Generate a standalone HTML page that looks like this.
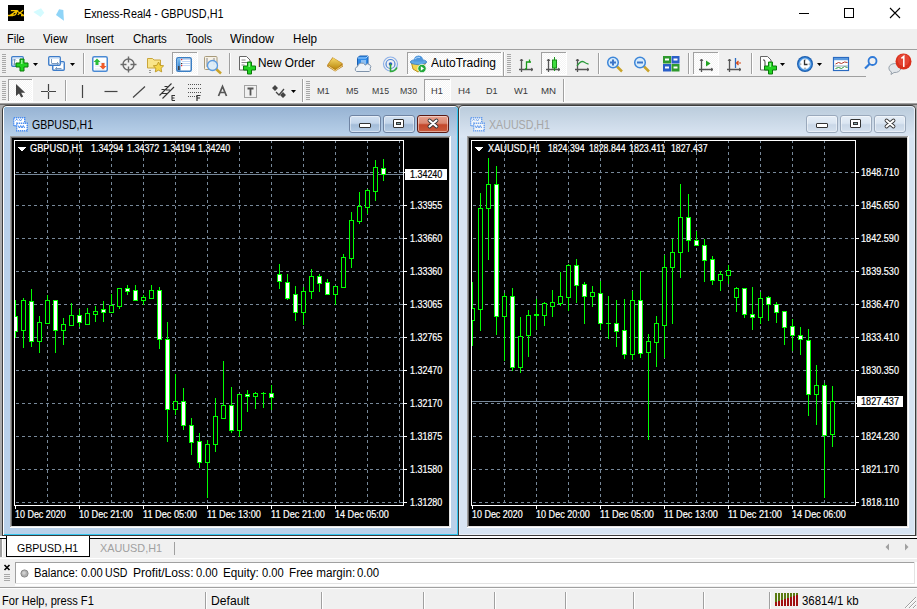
<!DOCTYPE html><html><head><meta charset="utf-8"><style>
*{margin:0;padding:0;box-sizing:border-box}
html,body{width:917px;height:609px;overflow:hidden;background:#f0f0f0;font-family:"Liberation Sans",sans-serif;position:relative}
.a{position:absolute}
.t{position:absolute;white-space:nowrap;line-height:1}
svg{position:absolute;overflow:visible}
</style></head><body><div class="a" style="left:0px;top:0px;width:917px;height:29px;background:#fff"></div><div class="t" style="left:83.5px;top:7.84px;font-size:12px;color:#000;transform:scaleX(0.9015);transform-origin:0 0;">Exness-Real4 - GBPUSD,H1</div><svg width="917" height="29" style="left:0;top:0"><rect x="8" y="5" width="16" height="16" fill="#000"/><path d="M8 15.5 H13 M21 15.5 H24 M10.8 10.7 H16.8 L10.2 15.3 M12.3 14.8 Q13.5 11.8 16.5 12.2 Q16.2 15.2 12.8 15.4 M16.8 11 L23.6 15.3 M17.8 14.8 L23.2 10.3" stroke="#f3c300" stroke-width="1.3" fill="none"/><path d="M33.3 12.1 L41 8.3 L44.3 12.8 L40.6 17 Z" fill="#d4fbff"/><path d="M56 14.9 L59.1 9.3 L63.3 10 L63.9 20.8 Z" fill="#8fd4f7"/><path d="M799 13.5 h10" stroke="#000" stroke-width="1"/><rect x="844.5" y="8.5" width="9" height="9" fill="none" stroke="#000" stroke-width="1"/><path d="M890 8 L900 18 M900 8 L890 18" stroke="#000" stroke-width="1.1"/></svg><div class="a" style="left:0px;top:29px;width:917px;height:20px;background:#f0f0f0"></div><div class="t" style="left:7.3px;top:32.84px;font-size:12px;color:#000;transform:scaleX(0.9161);transform-origin:0 0;">File</div><div class="t" style="left:43.3px;top:32.84px;font-size:12px;color:#000;transform:scaleX(0.9457);transform-origin:0 0;">View</div><div class="t" style="left:86.4px;top:32.84px;font-size:12px;color:#000;transform:scaleX(0.9300);transform-origin:0 0;">Insert</div><div class="t" style="left:133.3px;top:32.84px;font-size:12px;color:#000;transform:scaleX(0.9564);transform-origin:0 0;">Charts</div><div class="t" style="left:185.6px;top:32.84px;font-size:12px;color:#000;transform:scaleX(0.9350);transform-origin:0 0;">Tools</div><div class="t" style="left:229.9px;top:32.84px;font-size:12px;color:#000;transform:scaleX(1.0323);transform-origin:0 0;">Window</div><div class="t" style="left:292.5px;top:32.84px;font-size:12px;color:#000;transform:scaleX(0.9732);transform-origin:0 0;">Help</div><div class="a" style="left:0px;top:49px;width:917px;height:1px;background:#a0a0a0"></div><div class="a" style="left:0px;top:50px;width:917px;height:26px;background:#f0f0f0"></div><div class="a" style="left:0px;top:76px;width:866px;height:1px;background:#a0a0a0"></div><div class="a" style="left:0px;top:77px;width:917px;height:26px;background:#f0f0f0"></div><div class="a" style="left:0px;top:101px;width:917px;height:2px;background:#f7f7f7"></div><svg width="917" height="609" style="left:0;top:0"><defs><pattern id="dith" width="2" height="2" patternUnits="userSpaceOnUse"><rect width="2" height="2" fill="#f4f4f4"/><rect width="1" height="1" fill="#fff"/><rect x="1" y="1" width="1" height="1" fill="#fff"/></pattern><linearGradient id="gold" x1="0" y1="0" x2="0" y2="1"><stop offset="0" stop-color="#f7d96a"/><stop offset="1" stop-color="#b8860b"/></linearGradient><linearGradient id="blu" x1="0" y1="0" x2="0" y2="1"><stop offset="0" stop-color="#7fc4f5"/><stop offset="1" stop-color="#1f6fc5"/></linearGradient></defs><rect x="2" y="54" width="4" height="1" fill="#a8a8a8"/><rect x="2" y="56" width="4" height="1" fill="#a8a8a8"/><rect x="2" y="58" width="4" height="1" fill="#a8a8a8"/><rect x="2" y="60" width="4" height="1" fill="#a8a8a8"/><rect x="2" y="62" width="4" height="1" fill="#a8a8a8"/><rect x="2" y="64" width="4" height="1" fill="#a8a8a8"/><rect x="2" y="66" width="4" height="1" fill="#a8a8a8"/><rect x="2" y="68" width="4" height="1" fill="#a8a8a8"/><rect x="2" y="70" width="4" height="1" fill="#a8a8a8"/><rect x="2" y="72" width="4" height="1" fill="#a8a8a8"/><rect x="11.75" y="56.75" width="11.5" height="9.5" rx="1" fill="#fff" stroke="#3d7cc9" stroke-width="1.4"/><rect x="12.5" y="57.5" width="10" height="1.5" fill="#d6e6f8"/><path d="M14.5 59 v6" stroke="#7d9cc0" stroke-width="1.2"/><path d="M13 60.5 l1.5 -1.5 l1.5 1.5 M13 63.5 l1.5 1.5 l1.5 -1.5" stroke="#7d9cc0" fill="none"/><path d="M20 59 h4 v4 h4 v4 h-4 v4 h-4 v-4 h-4 v-4 h4 z" fill="#22d422" stroke="#0a7a0a" stroke-width="1"/><path d="M21 60 h1.5 v4 h-1.5 z" fill="#8ff58f"/><path d="M33 63 h5 l-2.5 3 z" fill="#000"/><rect x="52.75" y="61.75" width="11.5" height="8.5" rx="1" fill="#fff" stroke="#3d7cc9" stroke-width="1.4"/><rect x="53.5" y="62.5" width="10" height="1.5" fill="#d6e6f8"/><rect x="48.75" y="56.75" width="11.5" height="8.5" rx="1" fill="#fff" stroke="#3d7cc9" stroke-width="1.4"/><rect x="49.5" y="57.5" width="10" height="1.5" fill="#d6e6f8"/><path d="M51.5 63.5 h7 M55.5 68.5 h6" stroke="#7d9cc0" stroke-width="1"/><path d="M51.5 59 v4" stroke="#7d9cc0"/><path d="M57 62 l1.5 1.5 l-1.5 1.5 M57 67 l-1.5 1.5 l1.5 1.5" stroke="#7d9cc0" fill="none"/><path d="M70 63 h5 l-2.5 3 z" fill="#000"/><rect x="83" y="53" width="1" height="21" fill="#a0a0a0"/><rect x="84" y="53" width="1" height="21" fill="#fff"/><rect x="92.75" y="56.75" width="14.5" height="14.5" rx="1.5" fill="#fff" stroke="#4a8ad4" stroke-width="1.5"/><path d="M95 63 h10 M95 66 h10 M95 69 h10" stroke="#dde6f0" stroke-width="1"/><path d="M97 58.5 l3.5 3.5 h-2 v3 h-3 v-3 h-2 z" fill="#2dbd3a"/><path d="M103 69.5 l3.5 -3.5 h-2 v-3 h-3 v3 h-2 z" fill="#f05a28"/><circle cx="128.5" cy="64.5" r="5.5" fill="none" stroke="#6a6a6a" stroke-width="1.4"/><path d="M128.5 56.5 v6 M128.5 66.5 v6 M120.5 64.5 h6 M130.5 64.5 h6" stroke="#6a6a6a" stroke-width="1.4"/><path d="M147.5 58.5 h5 l1.5 1.5 h6.5 v8 h-13 z" fill="#f9e58a" stroke="#c9a53a" stroke-width="1"/><path d="M158.5 62 l1.6 3.3 3.6 .5 -2.6 2.5 .6 3.6 -3.2 -1.7 -3.2 1.7 .6 -3.6 -2.6 -2.5 3.6 -.5 z" fill="#f5d64a" stroke="#b8901a" stroke-width=".8"/><path d="M150 70 v3" stroke="#444" stroke-dasharray="1 1"/><rect x="172" y="52" width="26" height="23" fill="#fff"/><rect x="172" y="52" width="25" height="22" fill="#a0a0a0"/><rect x="173" y="53" width="24" height="21" fill="url(#dith)"/><rect x="176.75" y="57.75" width="14.5" height="13.5" rx="1.5" fill="#fff" stroke="#3c7fc4" stroke-width="1.5"/><rect x="177.5" y="58.5" width="3" height="12" fill="url(#blu)"/><rect x="178" y="66" width="1.5" height="4" fill="#444"/><path d="M182 59.5 h8 M182 61.5 h8 M182 63.5 h8 M182 65.5 h8" stroke="#c5d8f5" stroke-width="1"/><rect x="181" y="59" width="1.2" height="1.2" fill="#e22"/><rect x="181" y="63" width="1.2" height="1.2" fill="#333"/><rect x="181" y="65" width="1.2" height="1.2" fill="#e22"/><rect x="204.5" y="56.5" width="12.5" height="13" rx="1" fill="#f6f1e6" stroke="#a89a7a" stroke-width="1"/><path d="M207 58 v9 M214 58 v7" stroke="#888" stroke-width="1"/><path d="M215.5 68.5 l5.5 5" stroke="#c9a32a" stroke-width="2.5"/><circle cx="212.5" cy="65.5" r="5" fill="#dcecf8" fill-opacity=".9" stroke="#5b9be0" stroke-width="1.3"/><rect x="229" y="53" width="1" height="21" fill="#a0a0a0"/><rect x="230" y="53" width="1" height="21" fill="#fff"/><path d="M239.5 56.5 h7 l3.5 3.5 v10 h-10.5 z" fill="#fff" stroke="#666" stroke-width="1"/><path d="M241.5 60 h4 M241.5 62.5 h6 M241.5 65 h3" stroke="#888"/><path d="M247.5 62 h4 v4 h4 v4 h-4 v4 h-4 v-4 h-4 v-4 h4 z" fill="#22d422" stroke="#0a7a0a" stroke-width="1"/><path d="M248.5 63 h1.5 v4 h-1.5 z" fill="#8ff58f"/><path d="M327.2 65 L332.5 57.2 L342.5 63.3 L343 66.4 L335.1 71.6 L327.2 66.4 Z" fill="#b87c1a"/><path d="M328 64.6 L333 57.8 L342 63.4 L336 69.5 Z" fill="url(#gold)"/><path d="M328.5 66 L335.2 70.6 L342.5 65.5" stroke="#f3d98a" stroke-width="1" fill="none"/><path d="M357.5 58 l2 -2 h8.5 v9.5 h-10.5 z" fill="#2f8ae8" stroke="#1b5fb0" stroke-width="1"/><path d="M357.5 58 h8.5 l2 -2" stroke="#9fd0ff" fill="none"/><path d="M361 61 h5 M361 63 h5" stroke="#e8f4ff" stroke-width="1"/><path d="M356.5 71.5 a2.6 2.6 0 0 1 1 -4.8 a4.2 4.2 0 0 1 7.8 -1.6 a3 3 0 0 1 4.8 3.6 a2 2 0 0 1 -0.8 2.8 z" fill="#eef3f8" stroke="#7f93aa" stroke-width="1"/><circle cx="390.5" cy="64" r="7" fill="none" stroke="#8fb2e8" stroke-width="1.2"/><circle cx="390.5" cy="64" r="4.5" fill="none" stroke="#4f86d8" stroke-width="1.2"/><circle cx="390.5" cy="64" r="1.8" fill="#2a5fc0"/><path d="M390.5 64 v7.5 a7 7 0 0 0 6.5 -4" stroke="#2faa3a" stroke-width="1.6" fill="none"/><rect x="407" y="52" width="95" height="23" fill="#fff"/><rect x="407" y="52" width="94" height="22" fill="#a0a0a0"/><rect x="408" y="53" width="93" height="21" fill="url(#dith)"/><path d="M411.5 63 h14 l-3 6 l-4.5 3 l-5 -3 z" fill="#f3d44e" stroke="#b8901a" stroke-width="1"/><ellipse cx="418.5" cy="62" rx="8.2" ry="2.6" fill="#5fa8e6" stroke="#3a7cc0" stroke-width=".8"/><path d="M413.5 61.5 q0.5 -6 5 -6 q4.5 0 5 6 z" fill="#4f96dc"/><path d="M415 59 q2 -2.5 5 -1.5" stroke="#a8d4ff" fill="none"/><circle cx="422" cy="68.5" r="4.2" fill="#22a83a" stroke="#fff" stroke-width=".8"/><path d="M420.8 66.3 l3.2 2.2 l-3.2 2.2 z" fill="#fff"/><rect x="503" y="52" width="1" height="24" fill="#a0a0a0"/><rect x="504" y="52" width="1" height="24" fill="#fff"/><rect x="507" y="54" width="4" height="1" fill="#a8a8a8"/><rect x="507" y="56" width="4" height="1" fill="#a8a8a8"/><rect x="507" y="58" width="4" height="1" fill="#a8a8a8"/><rect x="507" y="60" width="4" height="1" fill="#a8a8a8"/><rect x="507" y="62" width="4" height="1" fill="#a8a8a8"/><rect x="507" y="64" width="4" height="1" fill="#a8a8a8"/><rect x="507" y="66" width="4" height="1" fill="#a8a8a8"/><rect x="507" y="68" width="4" height="1" fill="#a8a8a8"/><rect x="507" y="70" width="4" height="1" fill="#a8a8a8"/><rect x="507" y="72" width="4" height="1" fill="#a8a8a8"/><path d="M521.5 59 v13 M519 69.5 h14" stroke="#555" stroke-width="1.3" fill="none"/><path d="M520 61 l1.5 -2 l1.5 2 M531 68 l2 1.5 l-2 1.5" stroke="#555" stroke-width="1" fill="none"/><path d="M526.5 69 v-7 h3 v-2.5" stroke="#1a9a1a" stroke-width="1.3" fill="none"/><path d="M525 69 h1.5 M529.5 62 h1.5" stroke="#1a9a1a" stroke-width="1.3"/><rect x="541" y="52" width="26" height="23" fill="#fff"/><rect x="541" y="52" width="25" height="22" fill="#a0a0a0"/><rect x="542" y="53" width="24" height="21" fill="url(#dith)"/><path d="M548.5 59 v13 M546 69.5 h14" stroke="#555" stroke-width="1.3" fill="none"/><path d="M547 61 l1.5 -2 l1.5 2 M558 68 l2 1.5 l-2 1.5" stroke="#555" stroke-width="1" fill="none"/><path d="M554.5 57 v14" stroke="#1a9a1a" stroke-width="1"/><rect x="552.5" y="60" width="4" height="8" fill="#3fdc3f" stroke="#1a8a1a" stroke-width="1"/><path d="M577.5 59 v13 M575 69.5 h14" stroke="#555" stroke-width="1.3" fill="none"/><path d="M576 61 l1.5 -2 l1.5 2 M587 68 l2 1.5 l-2 1.5" stroke="#555" stroke-width="1" fill="none"/><path d="M577 66 q4 -6 7 -4 t4.5 2" stroke="#2a9a3a" stroke-width="1.3" fill="none"/><rect x="598" y="53" width="1" height="21" fill="#a0a0a0"/><rect x="599" y="53" width="1" height="21" fill="#fff"/><path d="M617 66.5 l5 5" stroke="#c9a32a" stroke-width="2.5"/><circle cx="613" cy="62.5" r="5.3" fill="#d8ecfb" stroke="#3d86d8" stroke-width="1.5"/><path d="M610 62.5 h6" stroke="#3d76c8" stroke-width="2"/><path d="M613 59.5 v6" stroke="#3d76c8" stroke-width="2"/><path d="M644 66.5 l5 5" stroke="#c9a32a" stroke-width="2.5"/><circle cx="640" cy="62.5" r="5.3" fill="#d8ecfb" stroke="#3d86d8" stroke-width="1.5"/><path d="M637 62.5 h6" stroke="#3d76c8" stroke-width="2"/><rect x="663" y="56" width="8" height="7.5" fill="#2f9a2f"/><rect x="671.5" y="56" width="8" height="7.5" fill="#2a5fc8"/><rect x="663" y="64" width="8" height="7.5" fill="#2a5fc8"/><rect x="671.5" y="64" width="8" height="7.5" fill="#2f9a2f"/><path d="M665 59.5 h4 M673.5 59.5 h4 M665 67.5 h4 M673.5 67.5 h4" stroke="#fff" stroke-width="2"/><rect x="688" y="53" width="1" height="21" fill="#a0a0a0"/><rect x="689" y="53" width="1" height="21" fill="#fff"/><rect x="693" y="52" width="26" height="23" fill="#fff"/><rect x="693" y="52" width="25" height="22" fill="#a0a0a0"/><rect x="694" y="53" width="24" height="21" fill="url(#dith)"/><path d="M701.5 59 v13 M699 69.5 h14" stroke="#555" stroke-width="1.3" fill="none"/><path d="M700 61 l1.5 -2 l1.5 2 M711 68 l2 1.5 l-2 1.5" stroke="#555" stroke-width="1" fill="none"/><path d="M706 60.5 v6 l4.5 -3 z" fill="#23a323"/><path d="M729.5 59 v13 M727 69.5 h14" stroke="#555" stroke-width="1.3" fill="none"/><path d="M728 61 l1.5 -2 l1.5 2 M739 68 l2 1.5 l-2 1.5" stroke="#555" stroke-width="1" fill="none"/><path d="M735.5 58 v10" stroke="#2a6ac0" stroke-width="1.3"/><path d="M741 63 h-4 M738.5 61 l-2 2 l2 2" stroke="#d44a1a" stroke-width="1.2" fill="none"/><rect x="751" y="53" width="1" height="21" fill="#a0a0a0"/><rect x="752" y="53" width="1" height="21" fill="#fff"/><path d="M760.5 56.5 h7 l3.5 3.5 v10 h-10.5 z" fill="#fff" stroke="#666" stroke-width="1"/><path d="M763 60 q2 -1 2 2 v5 q0 2 2 1" stroke="#444" fill="none"/><path d="M768.5 62 h4 v4 h4 v4 h-4 v4 h-4 v-4 h-4 v-4 h4 z" fill="#22d422" stroke="#0a7a0a" stroke-width="1"/><path d="M769.5 63 h1.5 v4 h-1.5 z" fill="#8ff58f"/><path d="M780 63 h5 l-2.5 3 z" fill="#000"/><circle cx="805" cy="64" r="8" fill="#1d5fb0"/><circle cx="805" cy="64" r="6.8" fill="#3f8fe0"/><circle cx="805" cy="64" r="5.2" fill="#fff" stroke="#bcd8f4" stroke-width=".8"/><path d="M804.5 60 v4.5 h3" stroke="#333" stroke-width="1.3" fill="none"/><circle cx="805" cy="59.8" r=".6" fill="#555"/><circle cx="805" cy="68.2" r=".6" fill="#555"/><circle cx="800.8" cy="64" r=".6" fill="#555"/><circle cx="809.2" cy="64" r=".6" fill="#555"/><path d="M817 63 h5 l-2.5 3 z" fill="#000"/><rect x="833.5" y="57.5" width="15" height="13" fill="#fff" stroke="#2a6ac0" stroke-width="1.2"/><rect x="834" y="58" width="14" height="2.2" fill="#5a9ae0"/><path d="M835.5 64 l3 -1.5 3 1 3 -1.5 3 .5" stroke="#b03a2a" fill="none"/><path d="M835.5 68.5 l3 -1 3 1 3 -2 3 1" stroke="#2a9a3a" fill="none"/><path d="M834 66 h14" stroke="#9ab"/><circle cx="872.5" cy="61" r="4" fill="none" stroke="#2f7ad8" stroke-width="1.8"/><path d="M869.5 64 l-4.5 4.5" stroke="#2f7ad8" stroke-width="2.2"/><path d="M889 69 a6 4.5 0 1 1 5 3.5 l-3 2 l.5 -2.5 a6 4 0 0 1 -2.5 -3" fill="#e2e6ea" stroke="#98a2ac" stroke-width="1"/><circle cx="903.5" cy="61.5" r="8" fill="#d9301c"/><circle cx="903.5" cy="60" r="6" fill="#f0584a" fill-opacity=".5"/><path d="M901.4 58.4 l2.4 -2 v10.6" stroke="#fff" stroke-width="1.5" fill="none"/><rect x="2" y="81" width="4" height="1" fill="#a8a8a8"/><rect x="2" y="83" width="4" height="1" fill="#a8a8a8"/><rect x="2" y="85" width="4" height="1" fill="#a8a8a8"/><rect x="2" y="87" width="4" height="1" fill="#a8a8a8"/><rect x="2" y="89" width="4" height="1" fill="#a8a8a8"/><rect x="2" y="91" width="4" height="1" fill="#a8a8a8"/><rect x="2" y="93" width="4" height="1" fill="#a8a8a8"/><rect x="2" y="95" width="4" height="1" fill="#a8a8a8"/><rect x="2" y="97" width="4" height="1" fill="#a8a8a8"/><rect x="2" y="99" width="4" height="1" fill="#a8a8a8"/><rect x="8" y="79" width="25" height="23" fill="#fff"/><rect x="8" y="79" width="24" height="22" fill="#a0a0a0"/><rect x="9" y="80" width="23" height="21" fill="url(#dith)"/><path d="M16 84 v12 l3 -2.5 l2.2 4 l2 -1 l-2 -3.8 h4 z" fill="#444"/><path d="M48.5 84 v15 M41 91.5 h15" stroke="#444" stroke-width="1.2"/><rect x="48" y="91" width="1" height="1" fill="#f0f0f0"/><rect x="65" y="80" width="1" height="21" fill="#a0a0a0"/><rect x="66" y="80" width="1" height="21" fill="#fff"/><path d="M82.5 85 v13" stroke="#444" stroke-width="1.2"/><path d="M104.5 91.5 h13" stroke="#444" stroke-width="1.2"/><path d="M133 97.5 l12 -11" stroke="#444" stroke-width="1.2"/><path d="M159.5 95.5 L171.5 83.5 M162.5 98.5 L174 87 M161.5 89.5 h3 M164.5 86.5 h3 M162 93.5 h5 M166 90 h4" stroke="#333" stroke-width="1.1"/><path d="M172 100.5 v-5 h3 M172 98 h2.5 M172 100.5 h3" stroke="#333" stroke-width="1.1" fill="none"/><path d="M188 84.5 h13 M188 88.5 h13 M188 92.5 h13 M188 96.5 h9" stroke="#555" stroke-dasharray="1 1"/><path d="M197 101 v-5.5 h3.5 M197 98 h3" stroke="#333" stroke-width="1.2" fill="none"/><path d="M218.5 96 L222.5 86.5 L226.5 96 M220 92.5 h5" stroke="#555" stroke-width="1.7" fill="none"/><rect x="244.5" y="85.5" width="12" height="12" fill="none" stroke="#555" stroke-dasharray="1 1"/><path d="M247.5 88.5 h6 M250.5 88.5 v7" stroke="#555" stroke-width="1.8"/><path d="M272 88 l3 -3 l3 3 l-3 3 z M280 95 l3 -3 l3 3 l-3 3 z" fill="#444"/><path d="M276 92 l3 3 l5 -6" stroke="#444" stroke-width="1.3" fill="none"/><path d="M291 90 h5 l-2.5 3 z" fill="#000"/><rect x="302" y="79" width="1" height="23" fill="#a0a0a0"/><rect x="303" y="79" width="1" height="23" fill="#fff"/><rect x="306" y="81" width="4" height="1" fill="#a8a8a8"/><rect x="306" y="83" width="4" height="1" fill="#a8a8a8"/><rect x="306" y="85" width="4" height="1" fill="#a8a8a8"/><rect x="306" y="87" width="4" height="1" fill="#a8a8a8"/><rect x="306" y="89" width="4" height="1" fill="#a8a8a8"/><rect x="306" y="91" width="4" height="1" fill="#a8a8a8"/><rect x="306" y="93" width="4" height="1" fill="#a8a8a8"/><rect x="306" y="95" width="4" height="1" fill="#a8a8a8"/><rect x="306" y="97" width="4" height="1" fill="#a8a8a8"/><rect x="306" y="99" width="4" height="1" fill="#a8a8a8"/><rect x="424" y="79" width="27" height="23" fill="#fff"/><rect x="424" y="79" width="26" height="22" fill="#a0a0a0"/><rect x="425" y="80" width="25" height="21" fill="url(#dith)"/><rect x="563" y="79" width="1" height="23" fill="#a0a0a0"/><rect x="564" y="79" width="1" height="23" fill="#fff"/></svg><div class="t" style="left:258.4px;top:56.84px;font-size:12px;color:#000;transform:scaleX(0.9824);transform-origin:0 0;">New Order</div><div class="t" style="left:431.2px;top:56.84px;font-size:12px;color:#000;transform:scaleX(1.0012);transform-origin:0 0;">AutoTrading</div><div class="t" style="left:317.4px;top:86.46px;font-size:9.5px;color:#3a3a3a;transform:scaleX(0.9542);transform-origin:0 0;">M1</div><div class="t" style="left:345.6px;top:86.46px;font-size:9.5px;color:#3a3a3a;transform:scaleX(0.9390);transform-origin:0 0;">M5</div><div class="t" style="left:372.0px;top:86.46px;font-size:9.5px;color:#3a3a3a;transform:scaleX(0.9200);transform-origin:0 0;">M15</div><div class="t" style="left:400.0px;top:86.46px;font-size:9.5px;color:#3a3a3a;transform:scaleX(0.9200);transform-origin:0 0;">M30</div><div class="t" style="left:430.7px;top:86.46px;font-size:9.5px;color:#3a3a3a;transform:scaleX(0.9704);transform-origin:0 0;">H1</div><div class="t" style="left:457.6px;top:86.46px;font-size:9.5px;color:#3a3a3a;transform:scaleX(1.0197);transform-origin:0 0;">H4</div><div class="t" style="left:486.4px;top:86.46px;font-size:9.5px;color:#3a3a3a;transform:scaleX(0.9539);transform-origin:0 0;">D1</div><div class="t" style="left:514.0px;top:86.46px;font-size:9.5px;color:#3a3a3a;transform:scaleX(0.9825);transform-origin:0 0;">W1</div><div class="t" style="left:540.7px;top:86.46px;font-size:9.5px;color:#3a3a3a;transform:scaleX(1.0222);transform-origin:0 0;">MN</div><div class="a" style="left:0px;top:103px;width:917px;height:433px;background:#ababab"></div><div class="a" style="left:0px;top:103px;width:917px;height:1px;background:#a0a0a0"></div><div class="a" style="left:0px;top:104px;width:917px;height:1px;background:#696969"></div><div class="a" style="left:2px;top:105px;width:457px;height:431px;background:#3c3c3c;border-radius:5px 5px 0 0"></div><div class="a" style="left:3px;top:106px;width:455px;height:429px;background:#fff;border-radius:4px 4px 0 0"></div><div class="a" style="left:4px;top:107px;width:454px;height:428px;background:#33c6f0;border-radius:3px 3px 0 0"></div><div class="a" style="left:4px;top:107px;width:453px;height:427px;background:linear-gradient(#97b3d3,#bad2ea 30px,#b9d1ea 31px);border-radius:3px 3px 0 0"></div><div class="a" style="left:458px;top:105px;width:458px;height:431px;background:#3c3c3c;border-radius:5px 5px 0 0"></div><div class="a" style="left:459px;top:106px;width:456px;height:429px;background:#e6eef7;border-radius:4px 4px 0 0"></div><div class="a" style="left:460px;top:107px;width:455px;height:428px;background:#e8eef6;border-radius:3px 3px 0 0"></div><div class="a" style="left:460px;top:107px;width:454px;height:427px;background:linear-gradient(#bbccdc,#dbe6f3 30px,#d7e4f2 31px);border-radius:3px 3px 0 0"></div><div class="a" style="left:349px;top:115px;width:32px;height:18px;border:1px solid #6f84a3;border-radius:3px;background:linear-gradient(#d4e2f2 0,#c3d5ea 45%,#a3bcd8 55%,#b5cce4 100%);box-shadow:inset 0 0 0 1px rgba(255,255,255,.45)"></div><div class="a" style="left:359px;top:123px;width:12px;height:5px;background:#fff;border:1px solid #333;border-radius:1px"></div><div class="a" style="left:383px;top:115px;width:32px;height:18px;border:1px solid #6f84a3;border-radius:3px;background:linear-gradient(#d4e2f2 0,#c3d5ea 45%,#a3bcd8 55%,#b5cce4 100%);box-shadow:inset 0 0 0 1px rgba(255,255,255,.45)"></div><div class="a" style="left:393px;top:119px;width:11px;height:9px;background:#fff;border:1px solid #333;border-radius:1px"></div><div class="a" style="left:396px;top:122px;width:5px;height:3px;background:#8aa;border:1px solid #333"></div><div class="a" style="left:417px;top:115px;width:32px;height:18px;border:1px solid #5b1a14;border-radius:3px;background:linear-gradient(#e8a18f 0,#d98872 45%,#c4482c 55%,#c85a3c 100%);box-shadow:inset 0 0 0 1px rgba(255,255,255,.45)"></div><svg width="20" height="20" style="left:423px;top:114px"><path d="M6.5 6.5 L13.5 12.5 M13.5 6.5 L6.5 12.5" stroke="#333" stroke-width="3.8" stroke-linecap="round"/><path d="M6.5 6.5 L13.5 12.5 M13.5 6.5 L6.5 12.5" stroke="#fff" stroke-width="2.1" stroke-linecap="round"/></svg><div class="a" style="left:806px;top:115px;width:32px;height:18px;border:1px solid #9aa9bc;border-radius:3px;background:linear-gradient(#e6eef7 0,#dbe6f2 45%,#c9d7e7 55%,#d6e2ef 100%);box-shadow:inset 0 0 0 1px rgba(255,255,255,.45)"></div><div class="a" style="left:816px;top:123px;width:12px;height:5px;background:#fff;border:1px solid #333;border-radius:1px"></div><div class="a" style="left:840px;top:115px;width:32px;height:18px;border:1px solid #9aa9bc;border-radius:3px;background:linear-gradient(#e6eef7 0,#dbe6f2 45%,#c9d7e7 55%,#d6e2ef 100%);box-shadow:inset 0 0 0 1px rgba(255,255,255,.45)"></div><div class="a" style="left:850px;top:119px;width:11px;height:9px;background:#fff;border:1px solid #333;border-radius:1px"></div><div class="a" style="left:853px;top:122px;width:5px;height:3px;background:#8aa;border:1px solid #333"></div><div class="a" style="left:874px;top:115px;width:32px;height:18px;border:1px solid #9aa9bc;border-radius:3px;background:linear-gradient(#e6eef7 0,#dbe6f2 45%,#c9d7e7 55%,#d6e2ef 100%);box-shadow:inset 0 0 0 1px rgba(255,255,255,.45)"></div><svg width="20" height="20" style="left:880px;top:114px"><path d="M6.5 6.5 L13.5 12.5 M13.5 6.5 L6.5 12.5" stroke="#333" stroke-width="3.8" stroke-linecap="round"/><path d="M6.5 6.5 L13.5 12.5 M13.5 6.5 L6.5 12.5" stroke="#fff" stroke-width="2.1" stroke-linecap="round"/></svg><div class="t" style="left:32.0px;top:118.84px;font-size:12px;color:#000;transform:scaleX(0.8795);transform-origin:0 0;">GBPUSD,H1</div><div class="t" style="left:489.0px;top:118.84px;font-size:12px;color:#a6a6a6;transform:scaleX(0.8879);transform-origin:0 0;">XAUUSD,H1</div><svg width="917" height="609" style="left:0;top:0"><g opacity="1"><rect x="13.7" y="117.7" width="11" height="8" fill="#fff" stroke="#3f86f0" stroke-width="1.4" stroke-dasharray="1.2 .8"/><path d="M15.5 120.5 l1.2 -1.3 l1.2 1.3 M19 119.5 l1.5 1 l1.5 -1" stroke="#3f86f0" fill="none" stroke-width="1"/><rect x="16.7" y="123.2" width="10.5" height="7.6" fill="#fff" stroke="#3f86f0" stroke-width="1.4" stroke-dasharray="1.2 .8"/><path d="M18.2 125.5 l1.2 2.5 l1.3 -2.5 l1.3 2.5 l1.3 -2.5 l1.3 2.5" stroke="#3f86f0" fill="none" stroke-width="1"/></g><g opacity="0.75"><rect x="470.7" y="117.7" width="11" height="8" fill="#fff" stroke="#3f86f0" stroke-width="1.4" stroke-dasharray="1.2 .8"/><path d="M472.5 120.5 l1.2 -1.3 l1.2 1.3 M476 119.5 l1.5 1 l1.5 -1" stroke="#3f86f0" fill="none" stroke-width="1"/><rect x="473.7" y="123.2" width="10.5" height="7.6" fill="#fff" stroke="#3f86f0" stroke-width="1.4" stroke-dasharray="1.2 .8"/><path d="M475.2 125.5 l1.2 2.5 l1.3 -2.5 l1.3 2.5 l1.3 -2.5 l1.3 2.5" stroke="#3f86f0" fill="none" stroke-width="1"/></g></svg><svg width="917" height="609" style="left:0;top:0" shape-rendering="crispEdges"><rect x="10" y="136" width="441" height="392" fill="#fff"/><rect x="10" y="136" width="440" height="391" fill="#a0a0a0"/><rect x="11" y="137" width="439" height="390" fill="#e3e3e3"/><rect x="11" y="137" width="438" height="389" fill="#696969"/><rect x="12" y="138" width="437" height="388" fill="#000"/><line x1="47.5" y1="140" x2="47.5" y2="505" stroke="#778899" stroke-width="1" stroke-dasharray="3 3"/><line x1="79.5" y1="140" x2="79.5" y2="505" stroke="#778899" stroke-width="1" stroke-dasharray="3 3"/><line x1="111.5" y1="140" x2="111.5" y2="505" stroke="#778899" stroke-width="1" stroke-dasharray="3 3"/><line x1="143.5" y1="140" x2="143.5" y2="505" stroke="#778899" stroke-width="1" stroke-dasharray="3 3"/><line x1="175.5" y1="140" x2="175.5" y2="505" stroke="#778899" stroke-width="1" stroke-dasharray="3 3"/><line x1="207.5" y1="140" x2="207.5" y2="505" stroke="#778899" stroke-width="1" stroke-dasharray="3 3"/><line x1="239.5" y1="140" x2="239.5" y2="505" stroke="#778899" stroke-width="1" stroke-dasharray="3 3"/><line x1="271.5" y1="140" x2="271.5" y2="505" stroke="#778899" stroke-width="1" stroke-dasharray="3 3"/><line x1="303.5" y1="140" x2="303.5" y2="505" stroke="#778899" stroke-width="1" stroke-dasharray="3 3"/><line x1="335.5" y1="140" x2="335.5" y2="505" stroke="#778899" stroke-width="1" stroke-dasharray="3 3"/><line x1="367.5" y1="140" x2="367.5" y2="505" stroke="#778899" stroke-width="1" stroke-dasharray="3 3"/><line x1="399.5" y1="140" x2="399.5" y2="505" stroke="#778899" stroke-width="1" stroke-dasharray="3 3"/><line x1="16" y1="172.5" x2="403" y2="172.5" stroke="#778899" stroke-width="1" stroke-dasharray="3 3"/><rect x="404" y="172" width="3" height="1" fill="#fff"/><line x1="16" y1="205.5" x2="403" y2="205.5" stroke="#778899" stroke-width="1" stroke-dasharray="3 3"/><rect x="404" y="205" width="3" height="1" fill="#fff"/><line x1="16" y1="238.5" x2="403" y2="238.5" stroke="#778899" stroke-width="1" stroke-dasharray="3 3"/><rect x="404" y="238" width="3" height="1" fill="#fff"/><line x1="16" y1="271.5" x2="403" y2="271.5" stroke="#778899" stroke-width="1" stroke-dasharray="3 3"/><rect x="404" y="271" width="3" height="1" fill="#fff"/><line x1="16" y1="304.5" x2="403" y2="304.5" stroke="#778899" stroke-width="1" stroke-dasharray="3 3"/><rect x="404" y="304" width="3" height="1" fill="#fff"/><line x1="16" y1="337.5" x2="403" y2="337.5" stroke="#778899" stroke-width="1" stroke-dasharray="3 3"/><rect x="404" y="337" width="3" height="1" fill="#fff"/><line x1="16" y1="370.5" x2="403" y2="370.5" stroke="#778899" stroke-width="1" stroke-dasharray="3 3"/><rect x="404" y="370" width="3" height="1" fill="#fff"/><line x1="16" y1="403.5" x2="403" y2="403.5" stroke="#778899" stroke-width="1" stroke-dasharray="3 3"/><rect x="404" y="403" width="3" height="1" fill="#fff"/><line x1="16" y1="436.5" x2="403" y2="436.5" stroke="#778899" stroke-width="1" stroke-dasharray="3 3"/><rect x="404" y="436" width="3" height="1" fill="#fff"/><line x1="16" y1="469.5" x2="403" y2="469.5" stroke="#778899" stroke-width="1" stroke-dasharray="3 3"/><rect x="404" y="469" width="3" height="1" fill="#fff"/><line x1="16" y1="502.5" x2="403" y2="502.5" stroke="#778899" stroke-width="1" stroke-dasharray="3 3"/><rect x="404" y="502" width="3" height="1" fill="#fff"/><rect x="15" y="506" width="1" height="3" fill="#fff"/><rect x="79" y="506" width="1" height="3" fill="#fff"/><rect x="143" y="506" width="1" height="3" fill="#fff"/><rect x="207" y="506" width="1" height="3" fill="#fff"/><rect x="271" y="506" width="1" height="3" fill="#fff"/><rect x="335" y="506" width="1" height="3" fill="#fff"/><rect x="15" y="174" width="388" height="1" fill="#778899"/><clipPath id="cl"><rect x="15" y="141" width="388" height="364"/></clipPath><g clip-path="url(#cl)"><rect x="15" y="300" width="1" height="38" fill="#00ff00"/><rect x="13" y="316" width="5" height="16" fill="#00ff00"/><rect x="14" y="317" width="3" height="14" fill="#fff"/><rect x="23" y="298" width="1" height="50" fill="#00ff00"/><rect x="21" y="300" width="5" height="31" fill="#00ff00"/><rect x="22" y="301" width="3" height="29" fill="#000"/><rect x="31" y="289" width="1" height="58" fill="#00ff00"/><rect x="29" y="301" width="5" height="41" fill="#00ff00"/><rect x="30" y="302" width="3" height="39" fill="#fff"/><rect x="39" y="316" width="1" height="37" fill="#00ff00"/><rect x="37" y="322" width="5" height="20" fill="#00ff00"/><rect x="38" y="323" width="3" height="18" fill="#000"/><rect x="47" y="295" width="1" height="29" fill="#00ff00"/><rect x="45" y="300" width="5" height="24" fill="#00ff00"/><rect x="46" y="301" width="3" height="22" fill="#000"/><rect x="55" y="300" width="1" height="53" fill="#00ff00"/><rect x="53" y="300" width="5" height="31" fill="#00ff00"/><rect x="54" y="301" width="3" height="29" fill="#fff"/><rect x="63" y="318" width="1" height="27" fill="#00ff00"/><rect x="61" y="324" width="5" height="7" fill="#00ff00"/><rect x="62" y="325" width="3" height="5" fill="#000"/><rect x="71" y="303" width="1" height="23" fill="#00ff00"/><rect x="69" y="315" width="5" height="11" fill="#00ff00"/><rect x="70" y="316" width="3" height="9" fill="#000"/><rect x="79" y="309" width="1" height="18" fill="#00ff00"/><rect x="77" y="315" width="5" height="8" fill="#00ff00"/><rect x="78" y="316" width="3" height="6" fill="#fff"/><rect x="87" y="308" width="1" height="17" fill="#00ff00"/><rect x="85" y="313" width="5" height="12" fill="#00ff00"/><rect x="86" y="314" width="3" height="10" fill="#000"/><rect x="95" y="306" width="1" height="16" fill="#00ff00"/><rect x="93" y="311" width="5" height="4" fill="#00ff00"/><rect x="94" y="312" width="3" height="2" fill="#000"/><rect x="103" y="301" width="1" height="21" fill="#00ff00"/><rect x="101" y="309" width="5" height="4" fill="#00ff00"/><rect x="102" y="310" width="3" height="2" fill="#fff"/><rect x="111" y="294" width="1" height="19" fill="#00ff00"/><rect x="109" y="305" width="5" height="8" fill="#00ff00"/><rect x="110" y="306" width="3" height="6" fill="#000"/><rect x="119" y="288" width="1" height="21" fill="#00ff00"/><rect x="117" y="288" width="5" height="19" fill="#00ff00"/><rect x="118" y="289" width="3" height="17" fill="#000"/><rect x="127" y="285" width="1" height="10" fill="#00ff00"/><rect x="125" y="288" width="5" height="4" fill="#00ff00"/><rect x="126" y="289" width="3" height="2" fill="#fff"/><rect x="135" y="285" width="1" height="16" fill="#00ff00"/><rect x="133" y="290" width="5" height="11" fill="#00ff00"/><rect x="134" y="291" width="3" height="9" fill="#fff"/><rect x="143" y="295" width="1" height="10" fill="#00ff00"/><rect x="141" y="297" width="5" height="4" fill="#00ff00"/><rect x="142" y="298" width="3" height="2" fill="#000"/><rect x="151" y="285" width="1" height="14" fill="#00ff00"/><rect x="149" y="290" width="5" height="9" fill="#00ff00"/><rect x="150" y="291" width="3" height="7" fill="#000"/><rect x="159" y="287" width="1" height="62" fill="#00ff00"/><rect x="157" y="290" width="5" height="50" fill="#00ff00"/><rect x="158" y="291" width="3" height="48" fill="#fff"/><rect x="167" y="322" width="1" height="120" fill="#00ff00"/><rect x="165" y="339" width="5" height="71" fill="#00ff00"/><rect x="166" y="340" width="3" height="69" fill="#fff"/><rect x="175" y="374" width="1" height="41" fill="#00ff00"/><rect x="173" y="401" width="5" height="9" fill="#00ff00"/><rect x="174" y="402" width="3" height="7" fill="#000"/><rect x="183" y="388" width="1" height="42" fill="#00ff00"/><rect x="181" y="401" width="5" height="25" fill="#00ff00"/><rect x="182" y="402" width="3" height="23" fill="#fff"/><rect x="191" y="418" width="1" height="37" fill="#00ff00"/><rect x="189" y="425" width="5" height="18" fill="#00ff00"/><rect x="190" y="426" width="3" height="16" fill="#fff"/><rect x="199" y="433" width="1" height="35" fill="#00ff00"/><rect x="197" y="441" width="5" height="22" fill="#00ff00"/><rect x="198" y="442" width="3" height="20" fill="#fff"/><rect x="207" y="440" width="1" height="58" fill="#00ff00"/><rect x="205" y="444" width="5" height="19" fill="#00ff00"/><rect x="206" y="445" width="3" height="17" fill="#000"/><rect x="215" y="398" width="1" height="54" fill="#00ff00"/><rect x="213" y="416" width="5" height="29" fill="#00ff00"/><rect x="214" y="417" width="3" height="27" fill="#000"/><rect x="223" y="361" width="1" height="58" fill="#00ff00"/><rect x="221" y="405" width="5" height="14" fill="#00ff00"/><rect x="222" y="406" width="3" height="12" fill="#000"/><rect x="231" y="387" width="1" height="46" fill="#00ff00"/><rect x="229" y="405" width="5" height="26" fill="#00ff00"/><rect x="230" y="406" width="3" height="24" fill="#fff"/><rect x="239" y="394" width="1" height="43" fill="#00ff00"/><rect x="237" y="394" width="5" height="37" fill="#00ff00"/><rect x="238" y="395" width="3" height="35" fill="#000"/><rect x="247" y="390" width="1" height="22" fill="#00ff00"/><rect x="245" y="394" width="5" height="3" fill="#00ff00"/><rect x="246" y="395" width="3" height="1" fill="#fff"/><rect x="255" y="392" width="1" height="17" fill="#00ff00"/><rect x="253" y="393" width="5" height="4" fill="#00ff00"/><rect x="254" y="394" width="3" height="2" fill="#000"/><rect x="263" y="392" width="1" height="16" fill="#00ff00"/><rect x="261" y="393" width="5" height="1" fill="#00ff00"/><rect x="271" y="385" width="1" height="25" fill="#00ff00"/><rect x="269" y="393" width="5" height="5" fill="#00ff00"/><rect x="270" y="394" width="3" height="3" fill="#fff"/><rect x="279" y="264" width="1" height="25" fill="#00ff00"/><rect x="277" y="274" width="5" height="8" fill="#00ff00"/><rect x="278" y="275" width="3" height="6" fill="#fff"/><rect x="287" y="274" width="1" height="26" fill="#00ff00"/><rect x="285" y="282" width="5" height="17" fill="#00ff00"/><rect x="286" y="283" width="3" height="15" fill="#fff"/><rect x="295" y="286" width="1" height="35" fill="#00ff00"/><rect x="293" y="294" width="5" height="19" fill="#00ff00"/><rect x="294" y="295" width="3" height="17" fill="#fff"/><rect x="303" y="287" width="1" height="38" fill="#00ff00"/><rect x="301" y="291" width="5" height="22" fill="#00ff00"/><rect x="302" y="292" width="3" height="20" fill="#000"/><rect x="311" y="269" width="1" height="30" fill="#00ff00"/><rect x="309" y="276" width="5" height="16" fill="#00ff00"/><rect x="310" y="277" width="3" height="14" fill="#000"/><rect x="319" y="274" width="1" height="18" fill="#00ff00"/><rect x="317" y="276" width="5" height="8" fill="#00ff00"/><rect x="318" y="277" width="3" height="6" fill="#fff"/><rect x="327" y="279" width="1" height="16" fill="#00ff00"/><rect x="325" y="282" width="5" height="13" fill="#00ff00"/><rect x="326" y="283" width="3" height="11" fill="#fff"/><rect x="335" y="286" width="1" height="19" fill="#00ff00"/><rect x="333" y="286" width="5" height="9" fill="#00ff00"/><rect x="334" y="287" width="3" height="7" fill="#000"/><rect x="343" y="254" width="1" height="34" fill="#00ff00"/><rect x="341" y="257" width="5" height="31" fill="#00ff00"/><rect x="342" y="258" width="3" height="29" fill="#000"/><rect x="351" y="212" width="1" height="56" fill="#00ff00"/><rect x="349" y="220" width="5" height="39" fill="#00ff00"/><rect x="350" y="221" width="3" height="37" fill="#000"/><rect x="359" y="192" width="1" height="32" fill="#00ff00"/><rect x="357" y="206" width="5" height="16" fill="#00ff00"/><rect x="358" y="207" width="3" height="14" fill="#000"/><rect x="367" y="189" width="1" height="25" fill="#00ff00"/><rect x="365" y="190" width="5" height="18" fill="#00ff00"/><rect x="366" y="191" width="3" height="16" fill="#000"/><rect x="375" y="160" width="1" height="41" fill="#00ff00"/><rect x="373" y="167" width="5" height="25" fill="#00ff00"/><rect x="374" y="168" width="3" height="23" fill="#000"/><rect x="383" y="159" width="1" height="22" fill="#00ff00"/><rect x="381" y="168" width="5" height="7" fill="#00ff00"/><rect x="382" y="169" width="3" height="5" fill="#fff"/></g><rect x="14.5" y="140.5" width="389" height="365" fill="none" stroke="#fff" stroke-width="1"/><path d="M18 147 H26 L22 151.5 Z" fill="#fff"/><rect x="405" y="169" width="42" height="11" fill="#fff"/><rect x="467" y="136" width="442" height="392" fill="#fff"/><rect x="467" y="136" width="441" height="391" fill="#a0a0a0"/><rect x="468" y="137" width="440" height="390" fill="#e3e3e3"/><rect x="468" y="137" width="439" height="389" fill="#696969"/><rect x="469" y="138" width="438" height="388" fill="#000"/><line x1="504.5" y1="140" x2="504.5" y2="505" stroke="#778899" stroke-width="1" stroke-dasharray="3 3"/><line x1="536.5" y1="140" x2="536.5" y2="505" stroke="#778899" stroke-width="1" stroke-dasharray="3 3"/><line x1="568.5" y1="140" x2="568.5" y2="505" stroke="#778899" stroke-width="1" stroke-dasharray="3 3"/><line x1="600.5" y1="140" x2="600.5" y2="505" stroke="#778899" stroke-width="1" stroke-dasharray="3 3"/><line x1="632.5" y1="140" x2="632.5" y2="505" stroke="#778899" stroke-width="1" stroke-dasharray="3 3"/><line x1="664.5" y1="140" x2="664.5" y2="505" stroke="#778899" stroke-width="1" stroke-dasharray="3 3"/><line x1="696.5" y1="140" x2="696.5" y2="505" stroke="#778899" stroke-width="1" stroke-dasharray="3 3"/><line x1="728.5" y1="140" x2="728.5" y2="505" stroke="#778899" stroke-width="1" stroke-dasharray="3 3"/><line x1="760.5" y1="140" x2="760.5" y2="505" stroke="#778899" stroke-width="1" stroke-dasharray="3 3"/><line x1="792.5" y1="140" x2="792.5" y2="505" stroke="#778899" stroke-width="1" stroke-dasharray="3 3"/><line x1="824.5" y1="140" x2="824.5" y2="505" stroke="#778899" stroke-width="1" stroke-dasharray="3 3"/><line x1="473" y1="172.5" x2="855" y2="172.5" stroke="#778899" stroke-width="1" stroke-dasharray="3 3"/><rect x="856" y="172" width="3" height="1" fill="#fff"/><line x1="473" y1="205.5" x2="855" y2="205.5" stroke="#778899" stroke-width="1" stroke-dasharray="3 3"/><rect x="856" y="205" width="3" height="1" fill="#fff"/><line x1="473" y1="238.5" x2="855" y2="238.5" stroke="#778899" stroke-width="1" stroke-dasharray="3 3"/><rect x="856" y="238" width="3" height="1" fill="#fff"/><line x1="473" y1="271.5" x2="855" y2="271.5" stroke="#778899" stroke-width="1" stroke-dasharray="3 3"/><rect x="856" y="271" width="3" height="1" fill="#fff"/><line x1="473" y1="304.5" x2="855" y2="304.5" stroke="#778899" stroke-width="1" stroke-dasharray="3 3"/><rect x="856" y="304" width="3" height="1" fill="#fff"/><line x1="473" y1="337.5" x2="855" y2="337.5" stroke="#778899" stroke-width="1" stroke-dasharray="3 3"/><rect x="856" y="337" width="3" height="1" fill="#fff"/><line x1="473" y1="370.5" x2="855" y2="370.5" stroke="#778899" stroke-width="1" stroke-dasharray="3 3"/><rect x="856" y="370" width="3" height="1" fill="#fff"/><line x1="473" y1="403.5" x2="855" y2="403.5" stroke="#778899" stroke-width="1" stroke-dasharray="3 3"/><rect x="856" y="403" width="3" height="1" fill="#fff"/><line x1="473" y1="436.5" x2="855" y2="436.5" stroke="#778899" stroke-width="1" stroke-dasharray="3 3"/><rect x="856" y="436" width="3" height="1" fill="#fff"/><line x1="473" y1="469.5" x2="855" y2="469.5" stroke="#778899" stroke-width="1" stroke-dasharray="3 3"/><rect x="856" y="469" width="3" height="1" fill="#fff"/><line x1="473" y1="502.5" x2="855" y2="502.5" stroke="#778899" stroke-width="1" stroke-dasharray="3 3"/><rect x="856" y="502" width="3" height="1" fill="#fff"/><rect x="472" y="506" width="1" height="3" fill="#fff"/><rect x="536" y="506" width="1" height="3" fill="#fff"/><rect x="600" y="506" width="1" height="3" fill="#fff"/><rect x="664" y="506" width="1" height="3" fill="#fff"/><rect x="728" y="506" width="1" height="3" fill="#fff"/><rect x="792" y="506" width="1" height="3" fill="#fff"/><rect x="472" y="401" width="383" height="1" fill="#778899"/><clipPath id="cr"><rect x="472" y="141" width="383" height="364"/></clipPath><g clip-path="url(#cr)"><rect x="472" y="282" width="1" height="64" fill="#00ff00"/><rect x="470" y="308" width="5" height="13" fill="#00ff00"/><rect x="471" y="309" width="3" height="11" fill="#000"/><rect x="480" y="193" width="1" height="138" fill="#00ff00"/><rect x="478" y="208" width="5" height="102" fill="#00ff00"/><rect x="479" y="209" width="3" height="100" fill="#000"/><rect x="488" y="158" width="1" height="102" fill="#00ff00"/><rect x="486" y="184" width="5" height="25" fill="#00ff00"/><rect x="487" y="185" width="3" height="23" fill="#000"/><rect x="496" y="166" width="1" height="169" fill="#00ff00"/><rect x="494" y="184" width="5" height="133" fill="#00ff00"/><rect x="495" y="185" width="3" height="131" fill="#fff"/><rect x="504" y="293" width="1" height="68" fill="#00ff00"/><rect x="502" y="296" width="5" height="21" fill="#00ff00"/><rect x="503" y="297" width="3" height="19" fill="#000"/><rect x="512" y="288" width="1" height="83" fill="#00ff00"/><rect x="510" y="296" width="5" height="72" fill="#00ff00"/><rect x="511" y="297" width="3" height="70" fill="#fff"/><rect x="520" y="317" width="1" height="56" fill="#00ff00"/><rect x="518" y="336" width="5" height="32" fill="#00ff00"/><rect x="519" y="337" width="3" height="30" fill="#000"/><rect x="528" y="310" width="1" height="47" fill="#00ff00"/><rect x="526" y="315" width="5" height="21" fill="#00ff00"/><rect x="527" y="316" width="3" height="19" fill="#000"/><rect x="536" y="299" width="1" height="31" fill="#00ff00"/><rect x="534" y="314" width="5" height="2" fill="#00ff00"/><rect x="544" y="302" width="1" height="24" fill="#00ff00"/><rect x="542" y="303" width="5" height="13" fill="#00ff00"/><rect x="543" y="304" width="3" height="11" fill="#000"/><rect x="552" y="290" width="1" height="27" fill="#00ff00"/><rect x="550" y="302" width="5" height="5" fill="#00ff00"/><rect x="551" y="303" width="3" height="3" fill="#000"/><rect x="560" y="272" width="1" height="34" fill="#00ff00"/><rect x="558" y="296" width="5" height="8" fill="#00ff00"/><rect x="559" y="297" width="3" height="6" fill="#000"/><rect x="568" y="264" width="1" height="47" fill="#00ff00"/><rect x="566" y="265" width="5" height="33" fill="#00ff00"/><rect x="567" y="266" width="3" height="31" fill="#000"/><rect x="576" y="259" width="1" height="44" fill="#00ff00"/><rect x="574" y="265" width="5" height="21" fill="#00ff00"/><rect x="575" y="266" width="3" height="19" fill="#fff"/><rect x="584" y="282" width="1" height="42" fill="#00ff00"/><rect x="582" y="284" width="5" height="13" fill="#00ff00"/><rect x="583" y="285" width="3" height="11" fill="#fff"/><rect x="592" y="286" width="1" height="21" fill="#00ff00"/><rect x="590" y="292" width="5" height="5" fill="#00ff00"/><rect x="591" y="293" width="3" height="3" fill="#000"/><rect x="600" y="281" width="1" height="49" fill="#00ff00"/><rect x="598" y="293" width="5" height="31" fill="#00ff00"/><rect x="599" y="294" width="3" height="29" fill="#fff"/><rect x="608" y="296" width="1" height="43" fill="#00ff00"/><rect x="606" y="323" width="5" height="1" fill="#00ff00"/><rect x="616" y="300" width="1" height="47" fill="#00ff00"/><rect x="614" y="323" width="5" height="9" fill="#00ff00"/><rect x="615" y="324" width="3" height="7" fill="#fff"/><rect x="624" y="299" width="1" height="60" fill="#00ff00"/><rect x="622" y="330" width="5" height="25" fill="#00ff00"/><rect x="623" y="331" width="3" height="23" fill="#fff"/><rect x="632" y="291" width="1" height="69" fill="#00ff00"/><rect x="630" y="300" width="5" height="55" fill="#00ff00"/><rect x="631" y="301" width="3" height="53" fill="#000"/><rect x="640" y="271" width="1" height="87" fill="#00ff00"/><rect x="638" y="300" width="5" height="54" fill="#00ff00"/><rect x="639" y="301" width="3" height="52" fill="#fff"/><rect x="648" y="334" width="1" height="106" fill="#00ff00"/><rect x="646" y="341" width="5" height="12" fill="#00ff00"/><rect x="647" y="342" width="3" height="10" fill="#000"/><rect x="656" y="316" width="1" height="51" fill="#00ff00"/><rect x="654" y="323" width="5" height="20" fill="#00ff00"/><rect x="655" y="324" width="3" height="18" fill="#000"/><rect x="664" y="255" width="1" height="103" fill="#00ff00"/><rect x="662" y="267" width="5" height="59" fill="#00ff00"/><rect x="663" y="268" width="3" height="57" fill="#000"/><rect x="672" y="239" width="1" height="85" fill="#00ff00"/><rect x="670" y="252" width="5" height="16" fill="#00ff00"/><rect x="671" y="253" width="3" height="14" fill="#000"/><rect x="680" y="184" width="1" height="94" fill="#00ff00"/><rect x="678" y="217" width="5" height="36" fill="#00ff00"/><rect x="679" y="218" width="3" height="34" fill="#000"/><rect x="688" y="194" width="1" height="58" fill="#00ff00"/><rect x="686" y="217" width="5" height="24" fill="#00ff00"/><rect x="687" y="218" width="3" height="22" fill="#fff"/><rect x="696" y="231" width="1" height="15" fill="#00ff00"/><rect x="694" y="240" width="5" height="6" fill="#00ff00"/><rect x="695" y="241" width="3" height="4" fill="#fff"/><rect x="704" y="239" width="1" height="43" fill="#00ff00"/><rect x="702" y="245" width="5" height="16" fill="#00ff00"/><rect x="703" y="246" width="3" height="14" fill="#fff"/><rect x="712" y="256" width="1" height="29" fill="#00ff00"/><rect x="710" y="259" width="5" height="22" fill="#00ff00"/><rect x="711" y="260" width="3" height="20" fill="#fff"/><rect x="720" y="271" width="1" height="20" fill="#00ff00"/><rect x="718" y="274" width="5" height="7" fill="#00ff00"/><rect x="719" y="275" width="3" height="5" fill="#000"/><rect x="728" y="265" width="1" height="19" fill="#00ff00"/><rect x="726" y="270" width="5" height="6" fill="#00ff00"/><rect x="727" y="271" width="3" height="4" fill="#000"/><rect x="736" y="287" width="1" height="25" fill="#00ff00"/><rect x="734" y="288" width="5" height="10" fill="#00ff00"/><rect x="735" y="289" width="3" height="8" fill="#000"/><rect x="744" y="288" width="1" height="30" fill="#00ff00"/><rect x="742" y="288" width="5" height="27" fill="#00ff00"/><rect x="743" y="289" width="3" height="25" fill="#fff"/><rect x="752" y="287" width="1" height="43" fill="#00ff00"/><rect x="750" y="314" width="5" height="4" fill="#00ff00"/><rect x="751" y="315" width="3" height="2" fill="#fff"/><rect x="760" y="292" width="1" height="32" fill="#00ff00"/><rect x="758" y="298" width="5" height="20" fill="#00ff00"/><rect x="759" y="299" width="3" height="18" fill="#000"/><rect x="768" y="296" width="1" height="25" fill="#00ff00"/><rect x="766" y="297" width="5" height="8" fill="#00ff00"/><rect x="767" y="298" width="3" height="6" fill="#fff"/><rect x="776" y="302" width="1" height="21" fill="#00ff00"/><rect x="774" y="304" width="5" height="9" fill="#00ff00"/><rect x="775" y="305" width="3" height="7" fill="#fff"/><rect x="784" y="311" width="1" height="34" fill="#00ff00"/><rect x="782" y="311" width="5" height="17" fill="#00ff00"/><rect x="783" y="312" width="3" height="15" fill="#fff"/><rect x="792" y="319" width="1" height="32" fill="#00ff00"/><rect x="790" y="326" width="5" height="10" fill="#00ff00"/><rect x="791" y="327" width="3" height="8" fill="#fff"/><rect x="800" y="327" width="1" height="28" fill="#00ff00"/><rect x="798" y="335" width="5" height="5" fill="#00ff00"/><rect x="799" y="336" width="3" height="3" fill="#fff"/><rect x="808" y="329" width="1" height="87" fill="#00ff00"/><rect x="806" y="340" width="5" height="55" fill="#00ff00"/><rect x="807" y="341" width="3" height="53" fill="#fff"/><rect x="816" y="365" width="1" height="60" fill="#00ff00"/><rect x="814" y="385" width="5" height="10" fill="#00ff00"/><rect x="815" y="386" width="3" height="8" fill="#000"/><rect x="824" y="383" width="1" height="115" fill="#00ff00"/><rect x="822" y="385" width="5" height="51" fill="#00ff00"/><rect x="823" y="386" width="3" height="49" fill="#fff"/><rect x="832" y="386" width="1" height="61" fill="#00ff00"/><rect x="830" y="401" width="5" height="34" fill="#00ff00"/><rect x="831" y="402" width="3" height="32" fill="#000"/></g><rect x="471.5" y="140.5" width="384" height="365" fill="none" stroke="#fff" stroke-width="1"/><path d="M475 147 H483 L479 151.5 Z" fill="#fff"/><rect x="857" y="396" width="46" height="11" fill="#fff"/></svg><div class="t" style="left:30.1px;top:143.53px;font-size:10px;color:#fff;transform:scaleX(0.9221);transform-origin:0 0;-webkit-text-stroke:0.2px #fff;">GBPUSD,H1</div><div class="t" style="left:90.8px;top:143.53px;font-size:10px;color:#fff;transform:scaleX(0.8935);transform-origin:0 0;-webkit-text-stroke:0.2px #fff;">1.34294</div><div class="t" style="left:126.6px;top:143.53px;font-size:10px;color:#fff;transform:scaleX(0.8935);transform-origin:0 0;-webkit-text-stroke:0.2px #fff;">1.34372</div><div class="t" style="left:162.5px;top:143.53px;font-size:10px;color:#fff;transform:scaleX(0.8935);transform-origin:0 0;-webkit-text-stroke:0.2px #fff;">1.34194</div><div class="t" style="left:198.1px;top:143.53px;font-size:10px;color:#fff;transform:scaleX(0.8935);transform-origin:0 0;-webkit-text-stroke:0.2px #fff;">1.34240</div><div class="t" style="left:409.5px;top:200.53px;font-size:10px;color:#fff;transform:scaleX(0.8935);transform-origin:0 0;-webkit-text-stroke:0.2px #fff;">1.33955</div><div class="t" style="left:409.5px;top:233.53px;font-size:10px;color:#fff;transform:scaleX(0.8935);transform-origin:0 0;-webkit-text-stroke:0.2px #fff;">1.33660</div><div class="t" style="left:409.5px;top:266.54px;font-size:10px;color:#fff;transform:scaleX(0.8935);transform-origin:0 0;-webkit-text-stroke:0.2px #fff;">1.33360</div><div class="t" style="left:409.5px;top:299.54px;font-size:10px;color:#fff;transform:scaleX(0.8935);transform-origin:0 0;-webkit-text-stroke:0.2px #fff;">1.33065</div><div class="t" style="left:409.5px;top:332.54px;font-size:10px;color:#fff;transform:scaleX(0.8935);transform-origin:0 0;-webkit-text-stroke:0.2px #fff;">1.32765</div><div class="t" style="left:409.5px;top:365.54px;font-size:10px;color:#fff;transform:scaleX(0.8935);transform-origin:0 0;-webkit-text-stroke:0.2px #fff;">1.32470</div><div class="t" style="left:409.5px;top:398.54px;font-size:10px;color:#fff;transform:scaleX(0.8935);transform-origin:0 0;-webkit-text-stroke:0.2px #fff;">1.32170</div><div class="t" style="left:409.5px;top:431.54px;font-size:10px;color:#fff;transform:scaleX(0.8935);transform-origin:0 0;-webkit-text-stroke:0.2px #fff;">1.31875</div><div class="t" style="left:409.5px;top:464.54px;font-size:10px;color:#fff;transform:scaleX(0.8935);transform-origin:0 0;-webkit-text-stroke:0.2px #fff;">1.31580</div><div class="t" style="left:409.5px;top:497.54px;font-size:10px;color:#fff;transform:scaleX(0.8935);transform-origin:0 0;-webkit-text-stroke:0.2px #fff;">1.31280</div><div class="t" style="left:409.5px;top:169.53px;font-size:10px;color:#000;transform:scaleX(0.8935);transform-origin:0 0;-webkit-text-stroke:0.2px #000;">1.34240</div><div class="t" style="left:15.0px;top:509.54px;font-size:10px;color:#fff;transform:scaleX(0.8942);transform-origin:0 0;-webkit-text-stroke:0.2px #fff;">10 Dec 2020</div><div class="t" style="left:79.0px;top:509.54px;font-size:10px;color:#fff;transform:scaleX(0.9059);transform-origin:0 0;-webkit-text-stroke:0.2px #fff;">10 Dec 21:00</div><div class="t" style="left:143.0px;top:509.54px;font-size:10px;color:#fff;transform:scaleX(0.9174);transform-origin:0 0;-webkit-text-stroke:0.2px #fff;">11 Dec 05:00</div><div class="t" style="left:207.0px;top:509.54px;font-size:10px;color:#fff;transform:scaleX(0.9174);transform-origin:0 0;-webkit-text-stroke:0.2px #fff;">11 Dec 13:00</div><div class="t" style="left:271.0px;top:509.54px;font-size:10px;color:#fff;transform:scaleX(0.9174);transform-origin:0 0;-webkit-text-stroke:0.2px #fff;">11 Dec 21:00</div><div class="t" style="left:335.0px;top:509.54px;font-size:10px;color:#fff;transform:scaleX(0.9059);transform-origin:0 0;-webkit-text-stroke:0.2px #fff;">14 Dec 05:00</div><div class="t" style="left:487.6px;top:143.53px;font-size:10px;color:#fff;transform:scaleX(0.9205);transform-origin:0 0;-webkit-text-stroke:0.2px #fff;">XAUUSD,H1</div><div class="t" style="left:547.8px;top:143.53px;font-size:10px;color:#fff;transform:scaleX(0.8753);transform-origin:0 0;-webkit-text-stroke:0.2px #fff;">1824.394</div><div class="t" style="left:588.7px;top:143.53px;font-size:10px;color:#fff;transform:scaleX(0.8753);transform-origin:0 0;-webkit-text-stroke:0.2px #fff;">1828.844</div><div class="t" style="left:629.3px;top:143.53px;font-size:10px;color:#fff;transform:scaleX(0.8913);transform-origin:0 0;-webkit-text-stroke:0.2px #fff;">1823.411</div><div class="t" style="left:670.7px;top:143.53px;font-size:10px;color:#fff;transform:scaleX(0.8753);transform-origin:0 0;-webkit-text-stroke:0.2px #fff;">1827.437</div><div class="t" style="left:861.3px;top:167.53px;font-size:10px;color:#fff;transform:scaleX(0.9113);transform-origin:0 0;-webkit-text-stroke:0.2px #fff;">1848.710</div><div class="t" style="left:861.3px;top:200.53px;font-size:10px;color:#fff;transform:scaleX(0.9113);transform-origin:0 0;-webkit-text-stroke:0.2px #fff;">1845.650</div><div class="t" style="left:861.3px;top:233.53px;font-size:10px;color:#fff;transform:scaleX(0.9113);transform-origin:0 0;-webkit-text-stroke:0.2px #fff;">1842.590</div><div class="t" style="left:861.3px;top:266.54px;font-size:10px;color:#fff;transform:scaleX(0.9113);transform-origin:0 0;-webkit-text-stroke:0.2px #fff;">1839.530</div><div class="t" style="left:861.3px;top:299.54px;font-size:10px;color:#fff;transform:scaleX(0.9113);transform-origin:0 0;-webkit-text-stroke:0.2px #fff;">1836.470</div><div class="t" style="left:861.3px;top:332.54px;font-size:10px;color:#fff;transform:scaleX(0.9113);transform-origin:0 0;-webkit-text-stroke:0.2px #fff;">1833.410</div><div class="t" style="left:861.3px;top:365.54px;font-size:10px;color:#fff;transform:scaleX(0.9113);transform-origin:0 0;-webkit-text-stroke:0.2px #fff;">1830.350</div><div class="t" style="left:861.3px;top:431.54px;font-size:10px;color:#fff;transform:scaleX(0.9113);transform-origin:0 0;-webkit-text-stroke:0.2px #fff;">1824.230</div><div class="t" style="left:861.3px;top:464.54px;font-size:10px;color:#fff;transform:scaleX(0.9113);transform-origin:0 0;-webkit-text-stroke:0.2px #fff;">1821.170</div><div class="t" style="left:861.3px;top:497.54px;font-size:10px;color:#fff;transform:scaleX(0.9280);transform-origin:0 0;-webkit-text-stroke:0.2px #fff;">1818.110</div><div class="t" style="left:861.3px;top:396.54px;font-size:10px;color:#000;transform:scaleX(0.9113);transform-origin:0 0;-webkit-text-stroke:0.2px #000;">1827.437</div><div class="t" style="left:472.0px;top:509.54px;font-size:10px;color:#fff;transform:scaleX(0.8942);transform-origin:0 0;-webkit-text-stroke:0.2px #fff;">10 Dec 2020</div><div class="t" style="left:536.0px;top:509.54px;font-size:10px;color:#fff;transform:scaleX(0.9059);transform-origin:0 0;-webkit-text-stroke:0.2px #fff;">10 Dec 20:00</div><div class="t" style="left:600.0px;top:509.54px;font-size:10px;color:#fff;transform:scaleX(0.9174);transform-origin:0 0;-webkit-text-stroke:0.2px #fff;">11 Dec 05:00</div><div class="t" style="left:664.0px;top:509.54px;font-size:10px;color:#fff;transform:scaleX(0.9174);transform-origin:0 0;-webkit-text-stroke:0.2px #fff;">11 Dec 13:00</div><div class="t" style="left:728.0px;top:509.54px;font-size:10px;color:#fff;transform:scaleX(0.9174);transform-origin:0 0;-webkit-text-stroke:0.2px #fff;">11 Dec 21:00</div><div class="t" style="left:792.0px;top:509.54px;font-size:10px;color:#fff;transform:scaleX(0.9059);transform-origin:0 0;-webkit-text-stroke:0.2px #fff;">14 Dec 06:00</div><div class="a" style="left:0px;top:536px;width:917px;height:21px;background:#f0f0f0"></div><div class="a" style="left:0px;top:536px;width:917px;height:2px;background:#fff"></div><div class="a" style="left:0px;top:538px;width:917px;height:1px;background:#000"></div><div class="a" style="left:6px;top:536px;width:84px;height:21px;background:#fff;border:1px solid #000;border-top:none"></div><div class="t" style="left:17.3px;top:542.69px;font-size:11px;color:#000;transform:scaleX(0.9626);transform-origin:0 0;">GBPUSD,H1</div><div class="t" style="left:100.0px;top:542.69px;font-size:11px;color:#a0a0a0;transform:scaleX(0.9845);transform-origin:0 0;">XAUUSD,H1</div><div class="a" style="left:174px;top:542px;width:1px;height:13px;background:#a0a0a0"></div><div class="a" style="left:0px;top:539px;width:2px;height:18px;background:#a0a0a0"></div><div class="a" style="left:2px;top:539px;width:1px;height:18px;background:#fff"></div><svg width="40" height="20" style="left:877px;top:538px"><path d="M8.5 9 l3.5 -3.5 v7 z" fill="#a0a0a0"/><path d="M28 5.5 l3.5 3.5 l-3.5 3.5 z" fill="#a0a0a0"/></svg><div class="a" style="left:0px;top:557px;width:917px;height:31px;background:#f0f0f0"></div><div class="a" style="left:0px;top:558px;width:917px;height:1px;background:#fff"></div><div class="a" style="left:15px;top:562px;width:902px;height:24px;background:#fff"></div><div class="a" style="left:15px;top:562px;width:900px;height:22px;background:#e3e3e3"></div><div class="a" style="left:15px;top:562px;width:899px;height:21px;background:#a0a0a0"></div><div class="a" style="left:16px;top:563px;width:898px;height:20px;background:#fff"></div><div class="t" style="left:33.8px;top:566.84px;font-size:12px;color:#000;transform:scaleX(0.9404);transform-origin:0 0;">Balance:</div><div class="t" style="left:80.8px;top:566.84px;font-size:12px;color:#000;transform:scaleX(0.9340);transform-origin:0 0;">0.00</div><div class="t" style="left:104.7px;top:566.84px;font-size:12px;color:#000;transform:scaleX(0.8807);transform-origin:0 0;">USD</div><div class="t" style="left:132.6px;top:566.84px;font-size:12px;color:#000;transform:scaleX(1.0083);transform-origin:0 0;">Profit/Loss:</div><div class="t" style="left:195.7px;top:566.84px;font-size:12px;color:#000;transform:scaleX(0.9297);transform-origin:0 0;">0.00</div><div class="t" style="left:223.1px;top:566.84px;font-size:12px;color:#000;transform:scaleX(0.9765);transform-origin:0 0;">Equity:</div><div class="t" style="left:261.6px;top:566.84px;font-size:12px;color:#000;transform:scaleX(0.9297);transform-origin:0 0;">0.00</div><div class="t" style="left:289.0px;top:566.84px;font-size:12px;color:#000;transform:scaleX(0.9730);transform-origin:0 0;">Free margin:</div><div class="t" style="left:356.9px;top:566.84px;font-size:12px;color:#000;transform:scaleX(0.9512);transform-origin:0 0;">0.00</div><svg width="40" height="30" style="left:0;top:560px"><circle cx="24.5" cy="13.5" r="3.6" fill="#b0b0b0" stroke="#8a8a8a" stroke-width="1"/><circle cx="24" cy="13" r="1.8" fill="#d0d0d0"/><path d="M4.5 5 l5 5 M9.5 5 l-5 5" stroke="#000" stroke-width="1.6"/><path d="M4 14.5 h6 M4 16.5 h6 M4 18.5 h6 M4 20.5 h6" stroke="#a8a8a8" stroke-width="1"/></svg><div class="a" style="left:0px;top:587px;width:917px;height:1px;background:#a0a0a0"></div><div class="a" style="left:0px;top:588px;width:917px;height:1px;background:#fff"></div><div class="a" style="left:0px;top:589px;width:917px;height:20px;background:#f0f0f0"></div><div class="t" style="left:2.4px;top:594.84px;font-size:12px;color:#000;transform:scaleX(0.9239);transform-origin:0 0;">For Help, press F1</div><div class="t" style="left:210.8px;top:594.84px;font-size:12px;color:#000;transform:scaleX(1.0121);transform-origin:0 0;">Default</div><div class="a" style="left:205px;top:592px;width:1px;height:17px;background:#a0a0a0"></div><div class="a" style="left:206px;top:592px;width:1px;height:17px;background:#fff"></div><div class="a" style="left:321px;top:592px;width:1px;height:17px;background:#a0a0a0"></div><div class="a" style="left:322px;top:592px;width:1px;height:17px;background:#fff"></div><div class="a" style="left:423px;top:592px;width:1px;height:17px;background:#a0a0a0"></div><div class="a" style="left:424px;top:592px;width:1px;height:17px;background:#fff"></div><div class="a" style="left:494px;top:592px;width:1px;height:17px;background:#a0a0a0"></div><div class="a" style="left:495px;top:592px;width:1px;height:17px;background:#fff"></div><div class="a" style="left:565px;top:592px;width:1px;height:17px;background:#a0a0a0"></div><div class="a" style="left:566px;top:592px;width:1px;height:17px;background:#fff"></div><div class="a" style="left:633px;top:592px;width:1px;height:17px;background:#a0a0a0"></div><div class="a" style="left:634px;top:592px;width:1px;height:17px;background:#fff"></div><div class="a" style="left:703px;top:592px;width:1px;height:17px;background:#a0a0a0"></div><div class="a" style="left:704px;top:592px;width:1px;height:17px;background:#fff"></div><div class="a" style="left:769px;top:592px;width:1px;height:17px;background:#a0a0a0"></div><div class="a" style="left:770px;top:592px;width:1px;height:17px;background:#fff"></div><div class="t" style="left:802.0px;top:594.84px;font-size:12px;color:#000;transform:scaleX(0.9512);transform-origin:0 0;">36814/1 kb</div><svg width="917" height="609" style="left:0;top:0"><rect x="775" y="593" width="2" height="13" fill="#5a7a10"/><rect x="775" y="602" width="2" height="4" fill="#a01010"/><rect x="778" y="593" width="2" height="13" fill="#5a7a10"/><rect x="778" y="601" width="2" height="5" fill="#a01010"/><rect x="781" y="593" width="2" height="13" fill="#5a7a10"/><rect x="781" y="600" width="2" height="6" fill="#a01010"/><rect x="784" y="593" width="2" height="13" fill="#5a7a10"/><rect x="784" y="599" width="2" height="7" fill="#a01010"/><rect x="787" y="593" width="2" height="13" fill="#5a7a10"/><rect x="787" y="598" width="2" height="8" fill="#a01010"/><rect x="790" y="593" width="2" height="13" fill="#5a7a10"/><rect x="790" y="597" width="2" height="9" fill="#a01010"/><rect x="793" y="593" width="2" height="13" fill="#5a7a10"/><rect x="793" y="596" width="2" height="10" fill="#a01010"/><rect x="796" y="593" width="2" height="13" fill="#5a7a10"/><rect x="796" y="595" width="2" height="11" fill="#a01010"/><path d="M905 608 l11 -11 M909 608 l7 -7 M913 608 l3 -3" stroke="#a0a0a0" stroke-width="1"/><path d="M906 608 l10 -10 M910 608 l6 -6 M914 608 l2 -2" stroke="#fff" stroke-width="1"/></svg></body></html>
